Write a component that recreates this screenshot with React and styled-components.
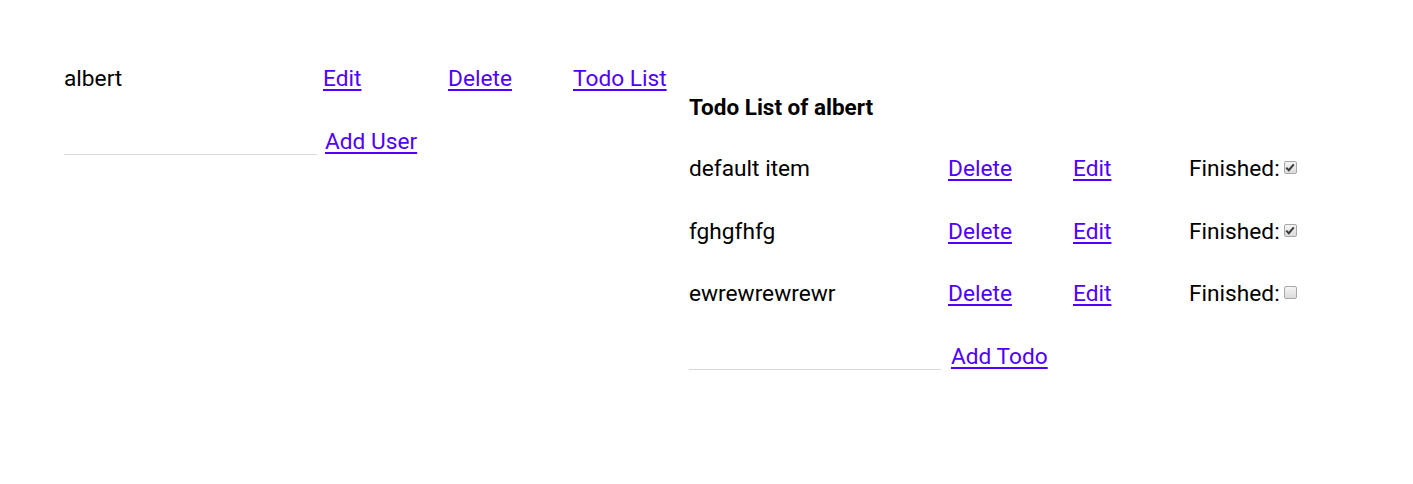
import React, { useState } from "react";
import styled, { createGlobalStyle } from "styled-components";

const GlobalStyle = createGlobalStyle`
  html, body {
    margin: 0;
    padding: 0;
    background: #ffffff;
  }
  body {
    font-family: Roboto, "Noto Sans", "Liberation Sans", sans-serif;
    font-size: 22.7px;
    color: #000000;
  }
`;

const Page = styled.div`
  display: flex;
  align-items: flex-start;
  padding: 47px 0 0 64px;
`;

const Column = styled.div`
  display: flex;
  flex-direction: column;
  width: ${(p) => p.width || "auto"};
`;

const Row = styled.div`
  display: flex;
  align-items: center;
  height: 62.8px;
`;

const Cell = styled.div`
  width: ${(p) => p.width}px;
  flex-shrink: 0;
  display: flex;
  align-items: center;
  white-space: nowrap;
`;

const LinkText = styled.a`
  color: #5000ff;
  text-decoration: underline;
  text-underline-offset: 3px;
  text-decoration-thickness: 2px;
  cursor: pointer;
`;

const Title = styled.h3`
  margin: 0 0 16px;
  padding-top: 46px;
  line-height: 28px;
  font-size: 22.5px;
  font-weight: 700;
`;

const LineInput = styled.input`
  width: ${(p) => p.width}px;
  height: 26px;
  margin: 0 ${(p) => p.gap}px 0 0;
  padding: 0;
  border: none;
  border-bottom: 1px solid #d9d9d9;
  outline: none;
  font: inherit;
  background: transparent;
`;

const Box = styled.span`
  display: inline-flex;
  align-items: center;
  justify-content: center;
  width: 13px;
  height: 13px;
  margin-left: 4px;
  margin-top: -2px;
  border: 1px solid #a8a8a8;
  border-radius: 2px;
  background: linear-gradient(#f4f4f4, #dcdcdc);
  box-sizing: border-box;
`;

function Check({ checked, onToggle }) {
  return (
    <Box role="checkbox" aria-checked={checked} onClick={onToggle}>
      {checked && (
        <svg width="10" height="9" viewBox="0 0 10 9">
          <path d="M1.2 4.6 L3.8 7.2 L8.8 1.4" fill="none" stroke="#3a3a3a" strokeWidth="2" />
        </svg>
      )}
    </Box>
  );
}

export default function App() {
  const [todos, setTodos] = useState([
    { text: "default item", done: true },
    { text: "fghgfhfg", done: true },
    { text: "ewrewrewrewr", done: false },
  ]);

  const toggle = (i) =>
    setTodos(todos.map((t, j) => (j === i ? { ...t, done: !t.done } : t)));

  return (
    <>
      <GlobalStyle />
      <Page>
        <Column width="625px">
          <Row>
            <Cell width={259}>albert</Cell>
            <Cell width={125}>
              <LinkText>Edit</LinkText>
            </Cell>
            <Cell width={125}>
              <LinkText>Delete</LinkText>
            </Cell>
            <Cell width={116}>
              <LinkText>Todo List</LinkText>
            </Cell>
          </Row>
          <Row>
            <LineInput width={253} gap={8} />
            <LinkText>Add User</LinkText>
          </Row>
        </Column>
        <Column>
          <Title>Todo List of albert</Title>
          {todos.map((t, i) => (
            <Row key={i}>
              <Cell width={259}>{t.text}</Cell>
              <Cell width={125}>
                <LinkText>Delete</LinkText>
              </Cell>
              <Cell width={116}>
                <LinkText>Edit</LinkText>
              </Cell>
              <Cell width={140}>
                Finished:
                <Check checked={t.done} onToggle={() => toggle(i)} />
              </Cell>
            </Row>
          ))}
          <Row>
            <LineInput width={252} gap={10} />
            <LinkText>Add Todo</LinkText>
          </Row>
        </Column>
      </Page>
    </>
  );
}
